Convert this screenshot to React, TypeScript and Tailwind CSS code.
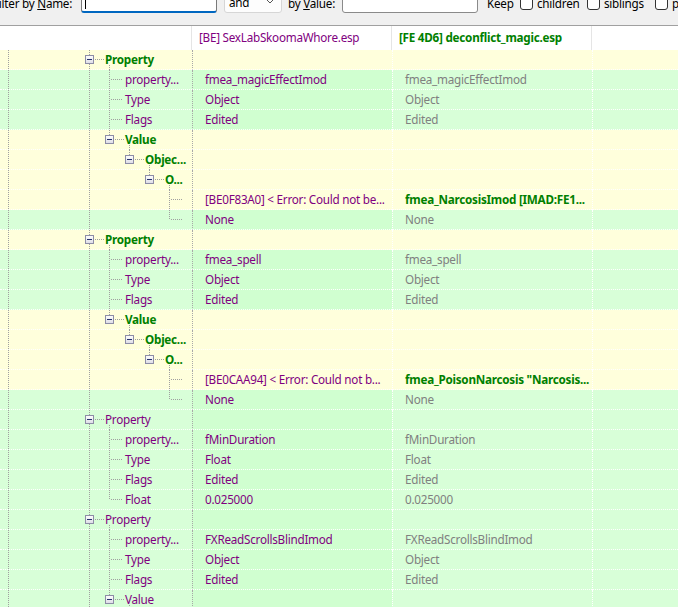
import React from "react";

type Kind = "conflict" | "same";

interface Node {
  name: string;
  kind: Kind;
  c1?: string;
  c2?: string;
  children?: Node[];
}

interface FlatRow {
  node: Node;
  depth: number;
  isLast: boolean;
  cont: boolean[]; // cont[a] = ancestor at depth a has a following sibling
}

const FONT = { fontFamily: '"Noto Sans", "Open Sans", sans-serif' };

const leafSet = (prop: string, type: string): Node[] => [
  { name: "property...", kind: "same", c1: prop, c2: prop },
  { name: "Type", kind: "same", c1: type, c2: type },
  { name: "Flags", kind: "same", c1: "Edited", c2: "Edited" },
];

const tree: Node[] = [
  {
    name: "Property",
    kind: "conflict",
    children: [
      ...leafSet("fmea_magicEffectImod", "Object"),
      {
        name: "Value",
        kind: "conflict",
        children: [
          {
            name: "Objec...",
            kind: "conflict",
            children: [
              {
                name: "O...",
                kind: "conflict",
                children: [
                  {
                    name: "",
                    kind: "conflict",
                    c1: "[BE0F83A0] < Error: Could not be...",
                    c2: "fmea_NarcosisImod [IMAD:FE1...",
                  },
                  { name: "", kind: "same", c1: "None", c2: "None" },
                ],
              },
            ],
          },
        ],
      },
    ],
  },
  {
    name: "Property",
    kind: "conflict",
    children: [
      ...leafSet("fmea_spell", "Object"),
      {
        name: "Value",
        kind: "conflict",
        children: [
          {
            name: "Objec...",
            kind: "conflict",
            children: [
              {
                name: "O...",
                kind: "conflict",
                children: [
                  {
                    name: "",
                    kind: "conflict",
                    c1: "[BE0CAA94] < Error: Could not b...",
                    c2: 'fmea_PoisonNarcosis "Narcosis...',
                  },
                  { name: "", kind: "same", c1: "None", c2: "None" },
                ],
              },
            ],
          },
        ],
      },
    ],
  },
  {
    name: "Property",
    kind: "same",
    children: [
      ...leafSet("fMinDuration", "Float"),
      { name: "Float", kind: "same", c1: "0.025000", c2: "0.025000" },
    ],
  },
  {
    name: "Property",
    kind: "same",
    children: [
      ...leafSet("FXReadScrollsBlindImod", "Object"),
      { name: "Value", kind: "same", children: [{ name: "", kind: "same" }] },
    ],
  },
];

function flatten(nodes: Node[], depth: number, cont: boolean[], topLevel: boolean, out: FlatRow[]) {
  nodes.forEach((n, i) => {
    const isLast = topLevel ? false : i === nodes.length - 1;
    out.push({ node: n, depth, isLast, cont });
    if (n.children && depth < 5 && !(depth === 2 && n.kind === "same")) {
      flatten(n.children, depth + 1, [...cont, !isLast], false, out);
    }
  });
  return out;
}

const rows = flatten(tree, 1, [false], true, []);

const lineX = (d: number) => 89 + 20 * (d - 1);
const LINE = "#a0a0a0";

function TreeLines({ row }: { row: FlatRow }) {
  const { depth, isLast, cont, node } = row;
  const x = lineX(depth) + 0.5;
  const hasBox = !!node.children;
  const parts: React.ReactNode[] = [];

  parts.push(<line key="g" x1={8.5} y1={0} x2={8.5} y2={20} />);
  for (let a = 1; a < depth; a++) {
    if (cont[a]) {
      const ax = lineX(a) + 0.5;
      parts.push(<line key={"a" + a} x1={ax} y1={0} x2={ax} y2={20} />);
    }
  }
  parts.push(<line key="t" x1={x} y1={0} x2={x} y2={9} />);
  if (!isLast) parts.push(<line key="b" x1={x} y1={10} x2={x} y2={20} />);
  if (hasBox) {
    parts.push(<line key="h" x1={x + 5} y1={9.5} x2={x + 14} y2={9.5} />);
    const cx = lineX(depth + 1) + 0.5;
    parts.push(<line key="c" x1={cx} y1={15} x2={cx} y2={20} />);
  } else {
    parts.push(<line key="h" x1={x + 1} y1={9.5} x2={x + 13} y2={9.5} />);
  }

  const bx = lineX(depth) - 4;
  return (
    <svg width={192} height={20} className="absolute left-0 top-0" shapeRendering="crispEdges">
      <defs>
        <linearGradient id="boxfill" x1="0" y1="0" x2="0" y2="1">
          <stop offset="0" stopColor="#ffffff" />
          <stop offset="1" stopColor="#dcdce6" />
        </linearGradient>
      </defs>
      <g stroke={LINE} strokeWidth={1} strokeDasharray="1 1">
        {parts}
      </g>
      {hasBox && (
        <g>
          <rect x={bx + 0.5} y={5.5} width={8} height={8} fill="url(#boxfill)" stroke="#8d8da6" />
          <line x1={bx + 2} y1={9.5} x2={bx + 7} y2={9.5} stroke="#27336b" />
        </g>
      )}
    </svg>
  );
}

function Row({ row }: { row: FlatRow }) {
  const { node, depth } = row;
  const conflict = node.kind === "conflict";
  const bgTree = conflict ? "bg-[#ffffdc]" : "bg-[#d8ffd8]";
  const bgC1 = conflict ? "bg-[#ffffdc]" : "bg-[#d0ffd0]";
  const bgRest = conflict ? "bg-[#ffffdc]" : "bg-[#d8ffd8]";
  const nameCls = conflict ? "text-[#008000] font-bold" : "text-[#800080]";
  const c2Cls = conflict ? "text-[#008000] font-bold" : "text-[#808080]";

  return (
    <div className="flex h-[20px] leading-[19px]">
      <div className={`relative w-[192px] shrink-0 border-b border-dotted border-white ${bgTree}`}>
        <TreeLines row={row} />
        <span
          className={`relative whitespace-nowrap ${nameCls}`}
          style={{ paddingLeft: lineX(depth) + 16 }}
        >
          {node.name}
        </span>
      </div>
      <div
        className={`w-[200px] shrink-0 border-l border-b border-dotted border-l-[#a8a8a8] border-b-white pl-[12px] whitespace-nowrap overflow-hidden text-[#800080] ${bgC1}`}
      >
        {node.c1}
      </div>
      <div
        className={`w-[200px] shrink-0 border-l border-b border-dotted border-white pl-[12px] whitespace-nowrap overflow-hidden ${c2Cls} ${bgRest}`}
      >
        {node.c2}
      </div>
      <div className={`flex-1 border-l border-b border-dotted border-white ${bgRest}`} />
    </div>
  );
}

function CheckBox() {
  return <span className="w-[13px] h-[13px] shrink-0 rounded-[3px] border border-[#333333] bg-white" />;
}

function Toolbar() {
  return (
    <div className="h-[26px] bg-[#f0f0f0] border-b border-[#a0a0a0] overflow-hidden text-black">
      <div className="flex items-center h-[23px] -mt-[10px]">
        <span className="w-[88px] -ml-[7px] shrink-0 whitespace-nowrap mt-[5px]">
          Filter by <span className="underline">N</span>ame:
        </span>
        <div className="w-[136px] h-[23px] shrink-0 bg-white border border-[#7a7a7a] border-b-2 border-b-[#0067c0] rounded-[3px] flex items-end pb-[1px] pl-[3px]">
          <span className="w-px h-[9px] bg-black mb-[1px]" />
        </div>
        <div className="ml-[7px] w-[58px] h-[23px] shrink-0 bg-[#fdfdfd] border border-[#d6d6d6] rounded-[3px] flex items-end justify-between pl-[4px] pr-[6px] pb-[2px]">
          <span className="leading-[16px]">and</span>
          <svg width="10" height="6" viewBox="0 0 10 6" className="mb-[6px]">
            <path d="M1 1 L5 5 L9 1" fill="none" stroke="#555" strokeWidth="1" />
          </svg>
        </div>
        <span className="ml-[6px] w-[54px] shrink-0 whitespace-nowrap mt-[5px]">
          by <span className="underline">V</span>alue:
        </span>
        <div className="w-[136px] h-[23px] shrink-0 bg-white border border-[#8a8a8a] rounded-[3px]" />
        <span className="ml-[9px] w-[33px] shrink-0 mt-[5px]">Keep</span>
        <span className="mt-[4px] flex"><CheckBox /></span>
        <span className="ml-[4px] w-[50px] shrink-0 mt-[5px]">children</span>
        <span className="mt-[4px] flex"><CheckBox /></span>
        <span className="ml-[4px] w-[51px] shrink-0 mt-[5px]">siblings</span>
        <span className="mt-[4px] flex"><CheckBox /></span>
        <span className="ml-[4px] shrink-0 whitespace-nowrap mt-[5px]">parent</span>
      </div>
    </div>
  );
}

function Header() {
  return (
    <div className="flex h-[24px] bg-white items-stretch">
      <div className="w-[192px] shrink-0 border-r border-[#e5e5e5]" />
      <div className="w-[200px] shrink-0 border-r border-[#e5e5e5] pl-[7px] flex items-center text-[#800080] whitespace-nowrap">
        [BE] SexLabSkoomaWhore.esp
      </div>
      <div className="w-[200px] shrink-0 border-r border-[#e5e5e5] pl-[7px] flex items-center text-[#008000] font-bold whitespace-nowrap">
        [FE 4D6] deconflict_magic.esp
      </div>
      <div className="flex-1" />
    </div>
  );
}

export default function App() {
  return (
    <div
      className="w-[678px] h-[607px] overflow-hidden bg-white text-[11.7px] tracking-[-0.25px]"
      style={FONT}
    >
      <Toolbar />
      <Header />
      <div>
        {rows.map((r, i) => (
          <Row key={i} row={r} />
        ))}
      </div>
    </div>
  );
}
